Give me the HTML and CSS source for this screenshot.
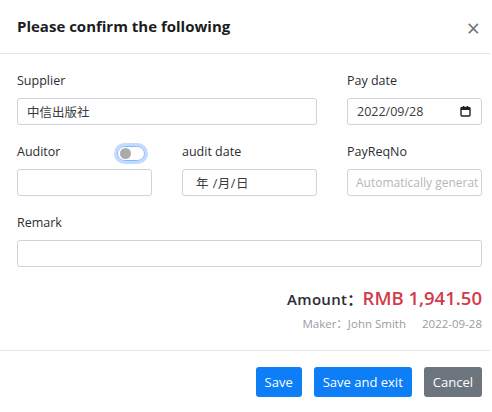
FILE: index.html
```html
<!DOCTYPE html>
<html>
<head>
<meta charset="utf-8">
<link rel="stylesheet" href="styles.css">
</head>
<body>
<div class="modal">
  <div class="modal-header">
    <h5 class="title">Please confirm the following</h5>
    <span class="close">&times;</span>
  </div>
  <div class="modal-body">
    <div class="grid">
      <div class="field span2">
        <label class="lbl">Supplier</label>
        <div class="input">中信出版社</div>
      </div>
      <div class="field">
        <label class="lbl">Pay date</label>
        <div class="input date">
          <span>2022/09/28</span>
          <svg class="cal" width="11" height="11" viewBox="0 0 11 11"><rect x="1" y="1.5" width="9" height="8.5" rx="1" fill="none" stroke="#222" stroke-width="1.4"/><rect x="1" y="1.5" width="9" height="2.5" fill="#222"/><rect x="3" y="0" width="1.2" height="2" fill="#222"/><rect x="6.8" y="0" width="1.2" height="2" fill="#222"/></svg>
        </div>
      </div>
      <div class="field">
        <div class="lbl-row">
          <label class="lbl">Auditor</label>
          <span class="switch"><span class="knob"></span></span>
        </div>
        <div class="input"></div>
      </div>
      <div class="field">
        <label class="lbl">audit date</label>
        <div class="input ymd">年 /月/日</div>
      </div>
      <div class="field">
        <label class="lbl">PayReqNo</label>
        <div class="input placeholder">Automatically generat</div>
      </div>
      <div class="field span3">
        <label class="lbl">Remark</label>
        <div class="input"></div>
      </div>
    </div>
    <div class="amount-row">
      <span class="amount-label">Amount：</span><span class="amount">RMB 1,941.50</span>
    </div>
    <div class="maker-row">
      <span>Maker：John Smith</span><span class="maker-date">2022-09-28</span>
    </div>
  </div>
  <div class="modal-footer">
    <button class="btn primary">Save</button>
    <button class="btn primary">Save and exit</button>
    <button class="btn secondary">Cancel</button>
  </div>
</div>
</body>
</html>
```
FILE: styles.css
```css
* { box-sizing: border-box; }
html, body { margin: 0; padding: 0; background: #fff; }
body {
  font-family: "Open Sans", "Noto Sans CJK SC", sans-serif;
  color: #212529;
  width: 492px;
  height: 412px;
  overflow: hidden;
}
.modal { width: 490px; }
.modal-header {
  display: flex;
  justify-content: space-between;
  align-items: center;
  padding: 15px 10px 16px 17px;
  height: 54px;
  border-bottom: 1px solid #e3e5e8;
}
.title {
  margin: 0;
  font-size: 15px;
  font-weight: 700;
  color: #1b1d20;
}
.close {
  font-size: 23px;
  line-height: 1;
  color: #707274;
  font-weight: 400;
  margin-top: 5px;
}
.modal-body { padding: 17px 8px 0 17px; }
.grid {
  display: grid;
  grid-template-columns: 135px 135px 135px;
  column-gap: 30px;
  row-gap: 17px;
}
.span2 { grid-column: span 2; }
.span3 { grid-column: span 3; }
.field { display: flex; flex-direction: column; }
.lbl {
  font-size: 12.5px;
  line-height: 20px;
  height: 20px;
  margin-bottom: 7px;
  color: #2b2d30;
}
.lbl-row { display: flex; align-items: center; justify-content: space-between; height: 20px; margin-bottom: 7px; }
.lbl-row .lbl { margin-bottom: 0; }
.switch {
  width: 28px;
  height: 15px;
  border: 1px solid #86b7fe;
  border-radius: 8px;
  box-shadow: 0 0 0 3px #c2dbfe;
  margin-right: 7px;
  display: flex;
  align-items: center;
  padding-left: 2px;
  margin-top: 2px;
}
.knob { width: 11px; height: 11px; border-radius: 50%; background: #a9abae; }
.input {
  height: 27px;
  border: 1px solid #ced4da;
  border-radius: 3px;
  padding: 0 9px;
  font-size: 12.5px;
  display: flex;
  align-items: center;
  color: #3a3c3f;
}
.date { justify-content: space-between; padding-right: 10px; }
.ymd { padding-left: 13px; letter-spacing: 0.5px; }
.placeholder { color: #b4b7ba; font-size: 12px; padding-left: 8px; white-space: nowrap; overflow: hidden; }
.amount-row {
  display: flex;
  justify-content: flex-end;
  align-items: baseline;
  margin-top: 18px;
  height: 24px;
}
.amount-label { font-size: 15px; font-weight: 600; color: #2b2d30; letter-spacing: 0.3px; }
.amount { font-size: 18.5px; font-weight: 600; color: #d33a4c; }
.maker-row {
  display: flex;
  justify-content: flex-end;
  gap: 16px;
  font-size: 11.5px;
  color: #9a9c9f;
  margin-top: 6px;
  height: 18px;
  line-height: 18px;
}
.modal-footer {
  margin-top: 17px;
  border-top: 1px solid #e3e5e8;
  display: flex;
  justify-content: flex-end;
  gap: 12px;
  padding: 16px 8px 0 0;
}
.btn {
  font-family: "Open Sans", sans-serif;
  font-size: 13px;
  height: 30px;
  border: none;
  border-radius: 3px;
  color: #fff;
  padding: 0 9px;
}
.primary { background: #0d7ef6; }
.secondary { background: #6c757d; }
```
